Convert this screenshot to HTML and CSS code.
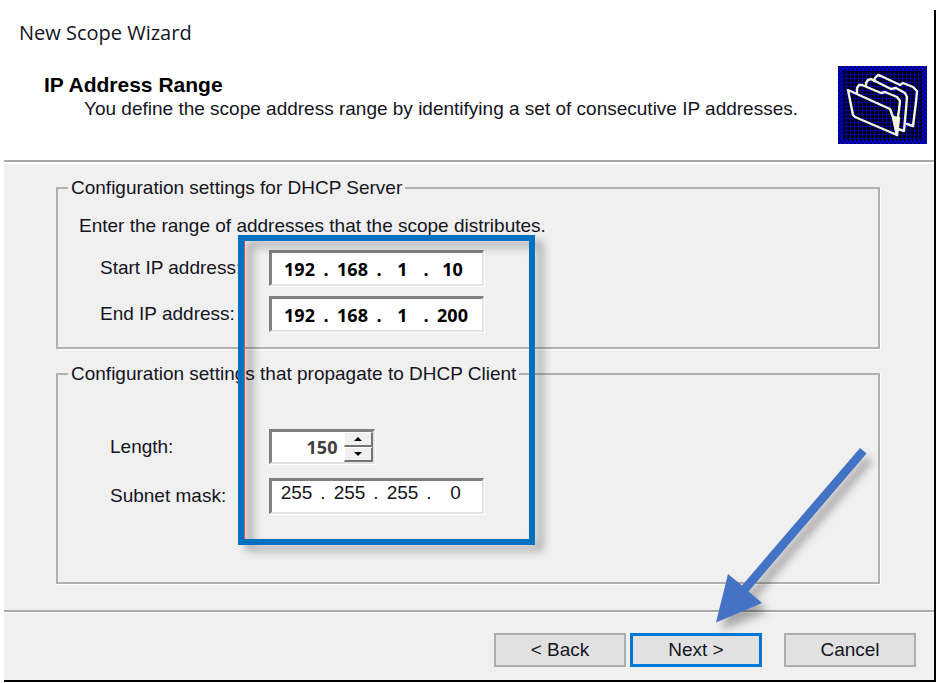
FILE: index.html
```html
<!DOCTYPE html>
<html lang="en">
<head>
<meta charset="utf-8">
<title>New Scope Wizard</title>
<link rel="stylesheet" href="styles.css">
</head>
<body>
<form class="wizard">
  <header class="header">
    <h1 class="title">New Scope Wizard</h1>
    <div class="banner">
      <div class="banner-text">
        <h2 class="step">IP Address Range</h2>
        <p class="desc">You define the scope address range by identifying a set of consecutive IP addresses.</p>
      </div>
      <svg class="folders" viewBox="0 0 89 78" aria-hidden="true">
        <defs>
          <pattern id="mesh" width="4" height="4" patternUnits="userSpaceOnUse">
            <rect width="4" height="4" fill="#0000a0"/>
            <rect x="1" y="1" width="3" height="3" fill="#000010"/>
          </pattern>
          <pattern id="edge" width="4" height="4" patternUnits="userSpaceOnUse">
            <rect width="4" height="4" fill="#0000d0"/>
            <rect width="2" height="2" fill="#000070"/>
            <rect x="2" y="2" width="2" height="2" fill="#000070"/>
          </pattern>
        </defs>
        <rect width="89" height="78" fill="url(#edge)"/>
        <rect x="5" y="4" width="79" height="70" fill="url(#mesh)"/>
        <g fill="none" stroke="#f4f4ec" stroke-width="2.4" stroke-linejoin="round" stroke-linecap="round">
          <path d="M36 15l1-3 3-3 3 1 17 8 2 1 3-2 10 4 4 4-1 11-3 24-6-2"/>
          <path d="M28 20v-3l2-3 3-1 20 10 5-1 9 5 2 4-1 12-2 22-6-2"/>
          <path d="M19 26v-4l2-3 3 0 19 8 4-1 12 5 3 4-1 9-2 14"/>
          <path d="M10 24l5 25 2 2 42 18-4-18-3-8z"/>
          <path d="M55 51l4 1 2 0-2 17z" fill="#f4f4ec"/>
        </g>
      </svg>
    </div>
  </header>

  <main class="body">
    <fieldset class="group server">
      <legend>Configuration settings for DHCP Server</legend>
      <p class="intro">Enter the range of addresses that the scope distributes.</p>
      <div class="row">
        <label for="start1">Start IP address:</label>
        <div class="field ip strong">
          <input id="start1" value="192"><span>.</span><input aria-label="Start IP address, octet 2" value="168"><span>.</span><input class="third" aria-label="Start IP address, octet 3" value="1"><span>.</span><input aria-label="Start IP address, octet 4" value="10">
        </div>
      </div>
      <div class="row">
        <label for="end1">End IP address:</label>
        <div class="field ip strong">
          <input id="end1" value="192"><span>.</span><input aria-label="End IP address, octet 2" value="168"><span>.</span><input class="third" aria-label="End IP address, octet 3" value="1"><span>.</span><input aria-label="End IP address, octet 4" value="200">
        </div>
      </div>
    </fieldset>

    <fieldset class="group client">
      <legend>Configuration settings that propagate to DHCP Client</legend>
      <div class="row">
        <label for="length">Length:</label>
        <div class="field spin">
          <input id="length" value="150">
          <div class="steps">
            <button type="button" aria-label="Increase length"><svg viewBox="0 0 6 3"><path d="M0 3L3 0l3 3z"/></svg></button>
            <button type="button" aria-label="Decrease length"><svg viewBox="0 0 6 3"><path d="M0 0h6L3 3z"/></svg></button>
          </div>
        </div>
      </div>
      <div class="row">
        <label for="mask1">Subnet mask:</label>
        <div class="field ip">
          <input id="mask1" value="255"><span>.</span><input aria-label="Subnet mask, octet 2" value="255"><span>.</span><input aria-label="Subnet mask, octet 3" value="255"><span>.</span><input aria-label="Subnet mask, octet 4" value="0">
        </div>
      </div>
    </fieldset>
  </main>

  <footer class="footer">
    <button type="button" class="btn">&lt; Back</button>
    <button type="button" class="btn primary">Next &gt;</button>
    <button type="button" class="btn cancel">Cancel</button>
  </footer>

  <div class="highlight"></div>
  <svg class="arrow" viewBox="0 0 170 200" aria-hidden="true">
    <path d="M158 8l6.500 5.500L46.500 151.500 60 163l-46 19.500L26 134l14 11.500z"/>
  </svg>
</form>
</body>
</html>
```
FILE: styles.css
```css
* {
  box-sizing: border-box;
}

body {
  margin: 0;
  background: #fff;
  color: #14141e;
  font: 19px/22px "Liberation Sans", Arial, sans-serif;
}

h1, h2, p {
  margin: 0;
}

.wizard {
  position: relative;
  margin: 10px 2px 2px 4px;
  background: #f0f0f0;
  border-right: 2px solid #000;
  border-bottom: 2px solid #000;
}

.header {
  background: #fff;
  padding: 11px 7px 16px 15px;
  border-bottom: 2px solid #a8a8a8;
  box-shadow: 0 2px 0 #fff;
}

.title {
  font: 20px/24px "Open Sans", "Noto Sans", sans-serif;
}

.banner {
  display: flex;
  justify-content: space-between;
  margin-top: 21px;
}

.banner-text {
  padding: 8px 0 0 25px;
}

.step {
  font-size: 21px;
  line-height: 22px;
  color: #000;
}

.desc {
  line-height: 26px;
  padding-left: 40px;
}

.folders {
  flex: none;
  width: 89px;
  height: 78px;
}

.body {
  padding: 15px 54px 26px 52px;
}

.group {
  min-width: 0;
  margin: 0;
  border: 2px solid #b0b0b0;
  box-shadow: 1px 1px 0 #fff;
}

.group legend {
  padding: 0 3px;
  background: #f0f0f0;
}

.server {
  padding: 16px 0 15px 42px;
}

.server legend {
  margin-left: -32px;
}

.client {
  margin-top: 14px;
  padding: 44px 0 68px 52px;
}

.client legend {
  margin-left: -42px;
}

.intro {
  margin: 0 0 13px -21px;
}

.row {
  display: flex;
  align-items: center;
}

.row label {
  flex: none;
  width: 169px;
}

.client .row label {
  width: 159px;
}

.server .row + .row {
  margin-top: 10px;
}

.client .row + .row {
  margin-top: 14px;
}

.field {
  display: flex;
  align-items: center;
  width: 215px;
  height: 36px;
  background: #fff;
  border: 2px solid #e4e4e4;
  border-top: 3px solid #808080;
  border-left: 3px solid #808080;
  box-shadow: 1px 1px 0 #fff;
}

.field input {
  width: 41px;
  padding: 0;
  border: 0;
  background: none;
  color: inherit;
  font: inherit;
  text-align: center;
}

.ip {
  padding: 0 0 8px 4px;
}

.ip span {
  width: 12px;
  text-align: center;
}

.strong {
  padding: 0 0 0 7px;
  color: #000;
  font: bold 18px/22px "Open Sans", "Noto Sans", sans-serif;
}

.strong .third {
  width: 35px;
}

.spin {
  width: 106px;
  height: 35px;
  justify-content: flex-end;
}

.spin input {
  width: 44px;
  color: #404040;
  font: bold 18px/22px "Open Sans", "Noto Sans", sans-serif;
}

.steps {
  display: flex;
  flex-direction: column;
  width: 29px;
  height: 30px;
}

.steps button {
  display: flex;
  flex: 1;
  align-items: center;
  justify-content: center;
  padding: 0;
  background: #f0f0f0;
  border: 1px solid #fff;
  border-right: 2px solid #757575;
  border-bottom: 2px solid #757575;
}

.steps svg {
  width: 8px;
  height: 4px;
}

.footer {
  display: flex;
  justify-content: flex-end;
  padding: 21px 18px 13px;
  border-top: 2px solid #a8a8a8;
  box-shadow: inset 0 1px 0 #fff;
}

.btn {
  width: 132px;
  height: 34px;
  margin-left: 4px;
  padding: 0;
  background: #e1e1e1;
  border: 2px solid #adadad;
  color: #14141e;
  font: inherit;
}

.primary {
  border: 3px solid #0078d7;
}

.cancel {
  margin-left: 22px;
}

.highlight {
  position: absolute;
  left: 234px;
  top: 225px;
  width: 297px;
  height: 310px;
  border: 6px solid #0070c0;
  filter: drop-shadow(8px 6px 4px rgba(0, 0, 0, 0.3));
  pointer-events: none;
}

.highlight::after {
  content: "";
  position: absolute;
  inset: 0;
  border-left: 1px solid #e0504c;
}

.arrow {
  position: absolute;
  right: 62px;
  bottom: 40px;
  width: 170px;
  height: 200px;
  fill: #4472c4;
  filter: drop-shadow(6px 8px 4px rgba(0, 0, 0, 0.3));
  overflow: visible;
  pointer-events: none;
}
```
